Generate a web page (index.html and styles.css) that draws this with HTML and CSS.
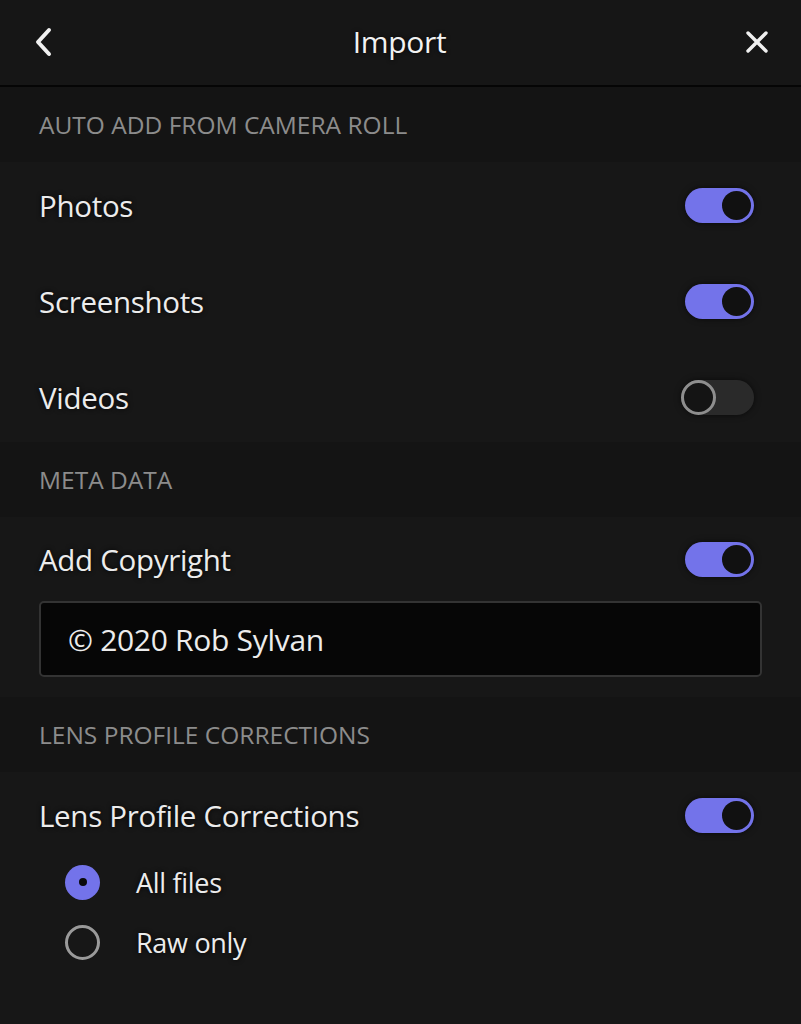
FILE: index.html
```html
<!DOCTYPE html>
<html>
<head>
<meta charset="utf-8">
<link rel="stylesheet" href="styles.css">
</head>
<body>
<div class="app">
  <header class="topbar">
    <svg class="icon back" viewBox="0 0 20 30" width="20" height="30"><path d="M15 3 L4 15 L15 27" fill="none" stroke="#f0f0f0" stroke-width="4" stroke-linecap="round" stroke-linejoin="round"/></svg>
    <div class="title">Import</div>
    <svg class="icon close" viewBox="0 0 24 24" width="24" height="24"><path d="M3 3 L21 21 M21 3 L3 21" fill="none" stroke="#f0f0f0" stroke-width="3.4" stroke-linecap="round"/></svg>
  </header>

  <div class="section-title">AUTO ADD FROM CAMERA ROLL</div>
  <div class="group auto">
    <div class="row"><span class="label">Photos</span><span class="toggle on"><span class="knob"></span></span></div>
    <div class="row"><span class="label">Screenshots</span><span class="toggle on"><span class="knob"></span></span></div>
    <div class="row"><span class="label">Videos</span><span class="toggle off"><span class="knob"></span></span></div>
  </div>

  <div class="section-title">META DATA</div>
  <div class="group meta">
    <div class="row"><span class="label">Add Copyright</span><span class="toggle on"><span class="knob"></span></span></div>
    <div class="input">© 2020 Rob Sylvan</div>
  </div>

  <div class="section-title">LENS PROFILE CORRECTIONS</div>
  <div class="group lens">
    <div class="row"><span class="label">Lens Profile Corrections</span><span class="toggle on"><span class="knob"></span></span></div>
    <div class="radio-row"><span class="radio checked"></span><span class="radio-label">All files</span></div>
    <div class="radio-row"><span class="radio"></span><span class="radio-label">Raw only</span></div>
  </div>
</div>
</body>
</html>
```

FILE: styles.css
```css
* { box-sizing: border-box; }
html, body { margin: 0; padding: 0; background: #171717; }
body { font-family: "Open Sans", "Lato", sans-serif; color: #ececec; }
.app { width: 801px; min-height: 1024px; background: #171717; }

.topbar {
  height: 87px;
  background: #161616;
  border-bottom: 2px solid #050505;
  display: flex;
  align-items: center;
  justify-content: space-between;
  padding: 0 32px 0 34px;
}
.title { font-size: 30px; color: #f2f2f2; text-shadow: 0 0 4px rgba(0,0,0,0.8); letter-spacing: -0.3px; margin-top: -2px; }
.icon.back { margin-top: -2px; }
.icon.close { margin-top: -1px; }

.section-title {
  height: 75px;
  background: #141414;
  display: flex;
  align-items: center;
  padding: 0 39px;
  font-size: 24.5px;
  color: #8c8c8c;
}

.group { background: #171717; display: flex; flex-direction: column; }
.row {
  height: 86px;
  flex: none;
  display: flex;
  align-items: center;
  justify-content: space-between;
  padding: 0 47px 0 39px;
}
.auto { gap: 10px; padding-bottom: 2px; }
.label { font-size: 29.5px; color: #ececec; letter-spacing: -0.3px; text-shadow: 0 0 5px rgba(0,0,0,0.9); }

.toggle {
  width: 69px; height: 35px; border-radius: 18px;
  display: flex; align-items: center;
  padding: 0 3px;
  box-shadow: 0 0 6px rgba(0,0,0,0.6);
}
.toggle.on { background: #7373ea; justify-content: flex-end; }
.toggle.off { background: #2a2a2a; padding: 0; width: 73px; }
.knob { width: 29px; height: 29px; border-radius: 50%; background: #111; }
.toggle.off .knob { width: 35px; height: 35px; border: 3px solid #8e8e8e; background: #141414; }

.meta { padding-bottom: 20px; }
.meta .row { height: 84px; }
.input {
  margin: 0 39px;
  height: 76px;
  background: #060606;
  border: 2px solid #333;
  border-radius: 5px;
  display: flex; align-items: center;
  padding: 0 27px;
  font-size: 30px; color: #ececec; letter-spacing: -0.3px;
}

.lens { padding-bottom: 40px; }
.lens .row { height: 86px; }
.radio-row {
  height: 48px;
  display: flex; align-items: center;
  padding-left: 65px;
}
.radio-row + .radio-row { margin-top: 12px; }
.radio {
  width: 35px; height: 35px; border-radius: 50%;
  border: 3px solid #9a9a9a;
  margin-right: 36px;
  display: flex; align-items: center; justify-content: center;
}
.radio.checked { background: #7373ea; border: none; }
.radio.checked::after { content: ""; width: 8px; height: 8px; border-radius: 50%; background: #0a0a0a; }
.radio-label { font-size: 27px; color: #ececec; letter-spacing: -0.3px; text-shadow: 0 0 5px rgba(0,0,0,0.9); }
```
